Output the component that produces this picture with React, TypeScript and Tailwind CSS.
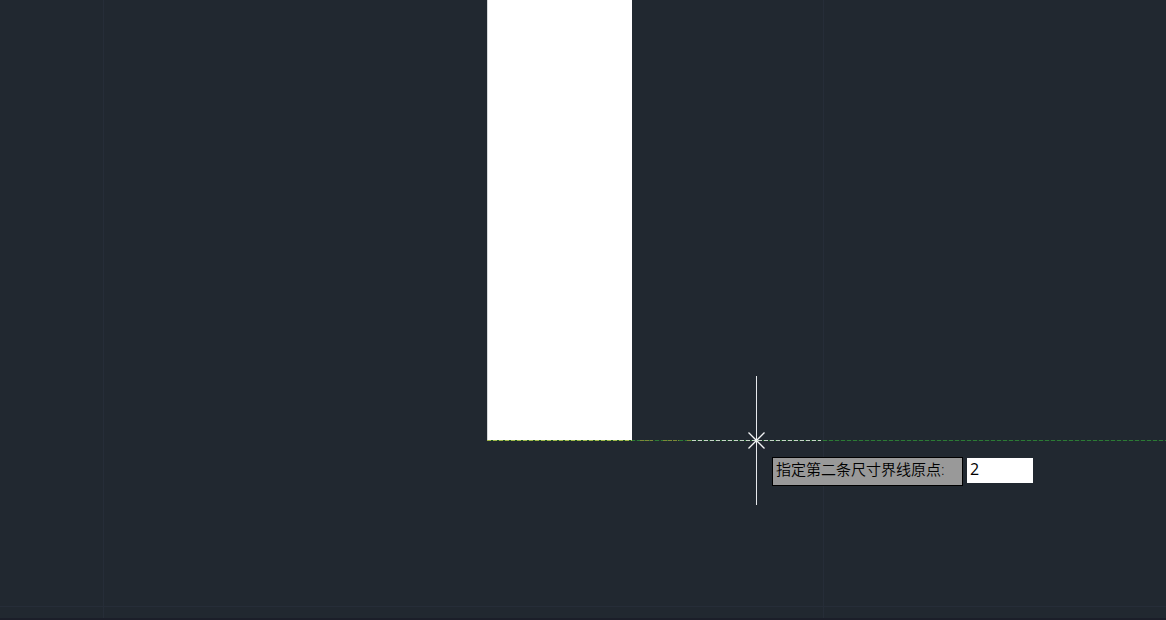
function Grid() {
  return (
    <g stroke="#262d38" strokeWidth="1">
      <line x1="103.5" y1="0" x2="103.5" y2="100%" />
      <line x1="823.5" y1="0" x2="823.5" y2="100%" />
      <line x1="0" y1="606.5" x2="100%" y2="606.5" />
    </g>
  );
}

function Crosshair() {
  return (
    <g fill="none">
      <line x1="692" y1="440.5" x2="821" y2="440.5" stroke="#c6d6c8" strokeDasharray="4 2" />
      <line x1="756.5" y1="376" x2="756.5" y2="505" stroke="#e6e9ec" />
      <path d="M748.5 432.5l16 16M764.5 432.5l-16 16" stroke="#f2f4f5" strokeWidth="1.3" />
    </g>
  );
}

function Drawing() {
  return (
    <svg className="absolute inset-0 h-full w-full" aria-hidden="true">
      <Grid />
      <rect x="487" y="0" width="145" height="440" fill="#ffffff" />
      <line x1="487.5" y1="0" x2="487.5" y2="440" stroke="#d5d8da" />

      {/* tracking line */}
      <line x1="487" y1="440.5" x2="100%" y2="440.5" stroke="#1d3b2a" />
      <line x1="487" y1="440.5" x2="100%" y2="440.5" stroke="#2c7a35" strokeDasharray="4 2" />

      {/* dimension preview over the tracking line */}
      <line x1="487" y1="440.5" x2="632" y2="440.5" stroke="#1f5a24" />
      <line x1="487" y1="440.5" x2="632" y2="440.5" stroke="#a3b84c" strokeDasharray="4 2" />
      <path d="M640 440.5h13M663 440.5h16M687 440.5h8" stroke="#7d8838" strokeDasharray="4 1" />

      <Crosshair />
    </svg>
  );
}

function DynamicInput() {
  return (
    <form
      className="absolute left-[772px] top-[457px] flex items-start gap-1"
      onSubmit={(e) => e.preventDefault()}
    >
      <label
        htmlFor="origin"
        className="h-[29px] w-[191px] whitespace-nowrap border border-black bg-[#999999] pl-[3px] text-[15px] font-[350] leading-[22px] text-black"
      >
        指定第二条尺寸界线原点:
      </label>
      <input
        id="origin"
        type="text"
        defaultValue="2"
        autoComplete="off"
        className="mt-px h-[25px] w-[66px] bg-white px-[3px] pb-[3px] text-[16px] leading-[22px] text-black outline-none"
      />
    </form>
  );
}

export default function App() {
  return (
    <main className="relative min-h-screen overflow-hidden border-b-2 border-[#1b1e29] bg-[#212830] font-['Open_Sans','Noto_Sans_CJK_SC',sans-serif]">
      <Drawing />
      <DynamicInput />
    </main>
  );
}
